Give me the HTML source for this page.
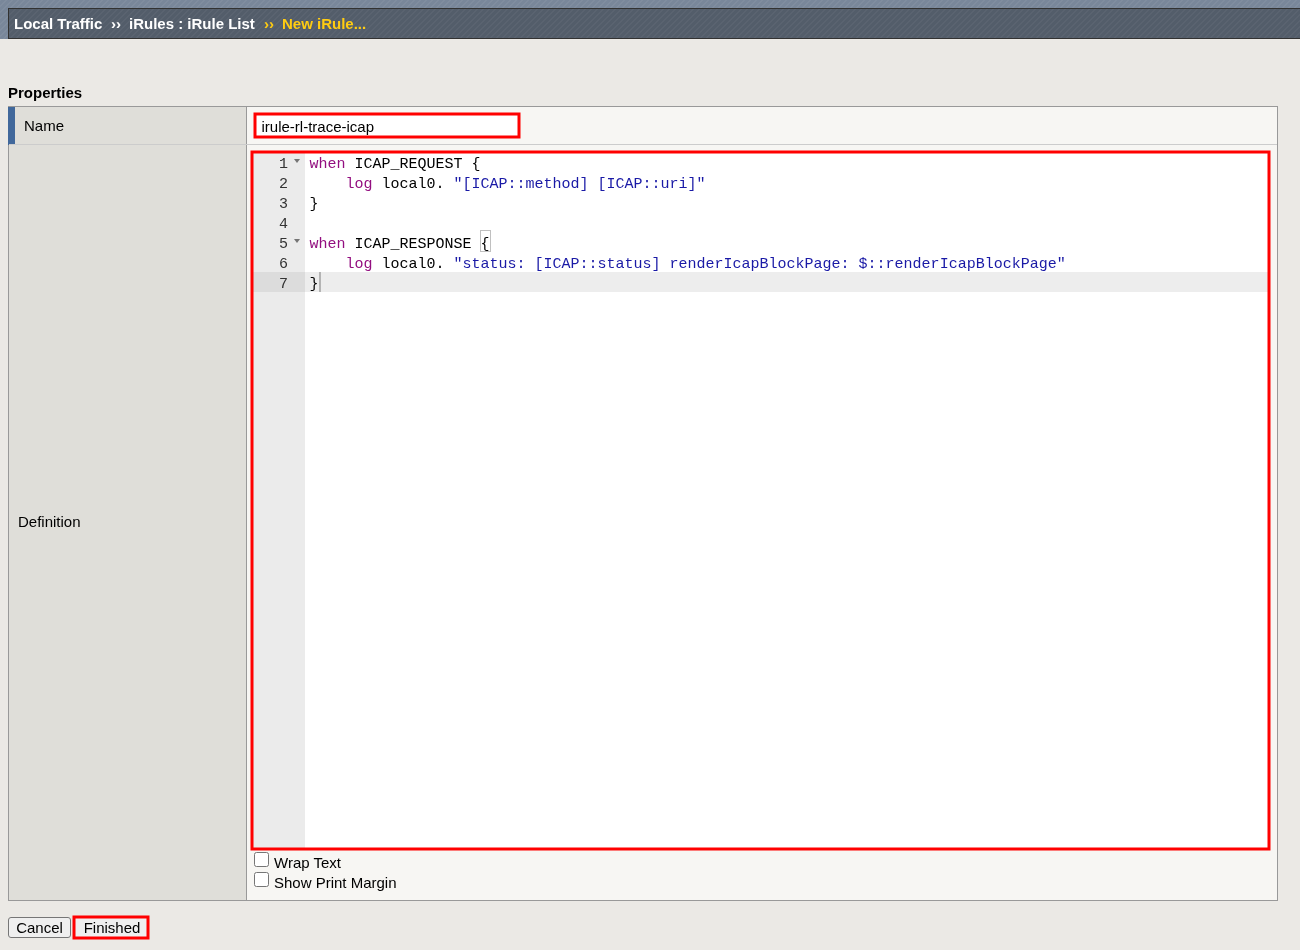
<!DOCTYPE html>
<html lang="en">
<head>
<meta charset="utf-8">
<title>New iRule...</title>
<style>
html,body{margin:0;padding:0;}
body{width:1300px;height:950px;overflow:hidden;position:relative;background:#ebe9e5;
  font-family:"Liberation Sans",Arial,sans-serif;font-size:15px;color:#000;}
#wrap{position:absolute;left:0;top:0;width:1300px;height:950px;will-change:transform;}
.abs{position:absolute;}
/* header */
#hdr{left:0;top:0;width:1300px;height:39px;background-color:#79879a;
  background-image:repeating-linear-gradient(135deg,rgba(255,255,255,.05) 0,rgba(255,255,255,.05) 1.3px,rgba(0,0,0,0) 1.3px,rgba(0,0,0,0) 4.24px);}
#crumb{left:8px;top:8px;width:1300px;height:29px;border:1px solid #323232;background-color:#535d6a;
  background-image:repeating-linear-gradient(135deg,rgba(255,255,255,.04) 0,rgba(255,255,255,.04) 1.3px,rgba(0,0,0,0) 1.3px,rgba(0,0,0,0) 4.24px);
  color:#fff;font-weight:bold;font-size:15px;line-height:29px;white-space:nowrap;}
#crumb span{position:absolute;top:0;}
#crumb .y{color:#ffcc11;}
/* properties */
#ptitle{left:8px;top:84px;font-weight:bold;font-size:15px;line-height:17px;}
#tbl{left:8px;top:106px;width:1268px;height:793px;border:1px solid #999;background:#f7f6f3;}
#lblcol{left:0;top:0;width:237px;height:793px;background:#dfded9;border-right:1px solid #999;}
#blue{left:-1px;top:0;width:7px;height:38px;background:#41689b;}
#rowsep{left:0;top:37px;width:1268px;height:1px;background:#ccc;}
.lbl{font-size:15px;line-height:17px;white-space:nowrap;}
/* name input */
#nameinp{left:255px;top:114px;width:264px;height:23px;background:#fff;
  font-size:15px;line-height:20px;white-space:nowrap;}
#nameinp span{position:absolute;left:6.5px;top:3px;}
/* editor */
#ed{left:252px;top:152px;width:1017px;height:697px;background:#fff;overflow:hidden;
  font-family:"Liberation Mono","DejaVu Sans Mono",monospace;font-size:15px;line-height:20px;}
#gut{left:0;top:0;width:53px;height:697px;background:#ebebeb;color:#333;}
#gactive{left:0;top:120px;width:53px;height:20px;background:#dcdcdc;}
.ln{position:absolute;left:0;width:36px;text-align:right;height:20px;margin-top:3px;}
.fold{position:absolute;left:41.5px;width:0;height:0;border-left:3.6px solid transparent;border-right:3.6px solid transparent;border-top:4.8px solid #747474;}
#active{left:53px;top:120px;width:964px;height:20px;background:rgba(0,0,0,.07);}
.cl{position:absolute;left:57.5px;height:20px;white-space:pre;color:#000;margin-top:3px;}
.k{color:#930f80;}
.s{color:#1a1aa6;}
#brk{left:228px;top:78px;width:9px;height:20px;border:1px solid #c0c0c0;}
#cur{left:67px;top:120px;width:2px;height:20px;background:#b4b4b4;}
#redsvg{left:0;top:0;width:1300px;height:950px;pointer-events:none;}
/* checkboxes */
.cb{width:13px;height:13px;border:1px solid #767676;border-radius:2.5px;background:#fff;}
/* buttons */
.btn{box-sizing:border-box;height:21px;border:1px solid #767676;border-radius:3px;background:#efefef;
  font-size:15px;line-height:19px;text-align:center;white-space:nowrap;}
#finb{left:75px;top:917px;width:74px;height:21px;background:#efefef;font-size:15px;line-height:21px;text-align:center;}
</style>
</head>
<body>
<div id="wrap">
<div id="hdr" class="abs"></div>
<div id="crumb" class="abs">
  <span style="left:5px">Local Traffic</span>
  <span style="left:102px">››</span>
  <span style="left:120px">iRules : iRule List</span>
  <span class="y" style="left:255px">››</span>
  <span class="y" style="left:273px">New iRule...</span>
</div>

<div id="ptitle" class="abs">Properties</div>

<div id="tbl" class="abs">
  <div id="lblcol" class="abs"></div>
  <div id="blue" class="abs"></div>
  <div id="rowsep" class="abs"></div>
  <div class="abs lbl" style="left:15px;top:10px;">Name</div>
  <div class="abs lbl" style="left:9px;top:406px;">Definition</div>
</div>

<div id="nameinp" class="abs"><span>irule-rl-trace-icap</span></div>

<div id="ed" class="abs">
  <div id="gut" class="abs">
    <div id="gactive" class="abs"></div>
    <div class="ln" style="top:0">1</div><div class="fold" style="top:7px"></div>
    <div class="ln" style="top:20px">2</div>
    <div class="ln" style="top:40px">3</div>
    <div class="ln" style="top:60px">4</div>
    <div class="ln" style="top:80px">5</div><div class="fold" style="top:87px"></div>
    <div class="ln" style="top:100px">6</div>
    <div class="ln" style="top:120px">7</div>
  </div>
  <div id="active" class="abs"></div>
  <div id="brk" class="abs"></div>
  <div class="cl" style="top:0"><span class="k">when</span> ICAP_REQUEST {</div>
  <div class="cl" style="top:20px">    <span class="k">log</span> local0. <span class="s">"[ICAP::method] [ICAP::uri]"</span></div>
  <div class="cl" style="top:40px">}</div>
  <div class="cl" style="top:60px"></div>
  <div class="cl" style="top:80px"><span class="k">when</span> ICAP_RESPONSE {</div>
  <div class="cl" style="top:100px">    <span class="k">log</span> local0. <span class="s">"status: [ICAP::status] renderIcapBlockPage: $::renderIcapBlockPage"</span></div>
  <div class="cl" style="top:120px">}</div>
  <div id="cur" class="abs"></div>
</div>

<div class="abs cb" style="left:254px;top:852px;"></div>
<div class="abs lbl" style="left:274px;top:854px;">Wrap Text</div>
<div class="abs cb" style="left:254px;top:872px;"></div>
<div class="abs lbl" style="left:274px;top:874px;">Show Print Margin</div>

<div class="abs btn" style="left:8px;top:917px;width:63px;">Cancel</div>
<div id="finb" class="abs">Finished</div>
<svg id="redsvg" class="abs" width="1300" height="950" viewBox="0 0 1300 950">
  <g fill="none" stroke="#ff0000" stroke-width="3">
    <rect x="255" y="114" width="264" height="23"/>
    <rect x="252" y="152" width="1017" height="697"/>
    <rect x="74" y="917" width="74" height="21"/>
  </g>
</svg>
</div>
</body>
</html>
